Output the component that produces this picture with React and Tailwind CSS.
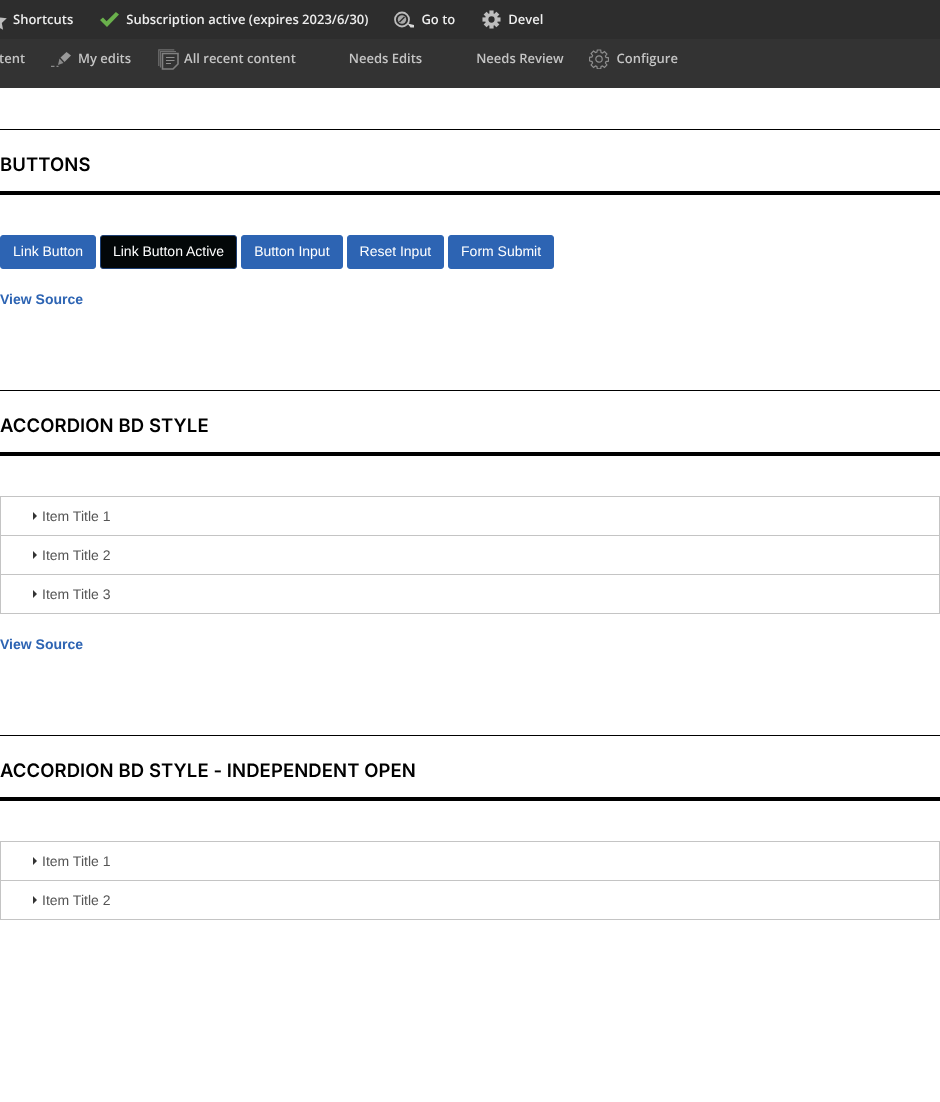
import React from 'react';

const openSans = { fontFamily: '"Open Sans", sans-serif' };
const TEETH = [0, 45, 90, 135, 180, 225, 270, 315];

function StarIcon() {
  return (
    <svg width="20" height="20" viewBox="0 0 20 20" className="ml-[-13px] mt-[3px]">
      <path d="M10 0l3 6.4 6.8.9-5 4.7 1.3 6.8L10 15.5 3.900 18.800l1.300-6.800-5-4.700 6.800-.9z" fill="#bdbdbd" />
    </svg>
  );
}

function CheckIcon() {
  return (
    <svg width="19" height="15" viewBox="0 0 19 15">
      <path d="M0 8l3-2.600 3.600 3.800L15.900 0 19 2.500 7 15z" fill="#6ab04c" />
    </svg>
  );
}

function GotoIcon() {
  return (
    <svg width="21" height="18" viewBox="0 0 21 18">
      <circle cx="8" cy="8.500" r="7" fill="none" stroke="#bdbdbd" strokeWidth="1.800" />
      <circle cx="8" cy="8.500" r="4.200" fill="#a8a8a8" />
      <path d="M5.500 11l5-5" stroke="#2d2d2d" strokeWidth="1.500" />
      <path d="M13.500 12.500l6.500 1.500v2.500h-3.500z" fill="#d8d8d8" />
    </svg>
  );
}

function SolidGearIcon() {
  return (
    <svg width="19" height="19" viewBox="0 0 20 20">
      {TEETH.map(a => (
        <rect key={a} x="7.800" y="0.500" width="4.400" height="5" fill="#bdbdbd" transform={`rotate(${a} 10 10)`} />
      ))}
      <circle cx="10" cy="10" r="5" fill="none" stroke="#bdbdbd" strokeWidth="3.400" />
    </svg>
  );
}

function OutlineGearIcon() {
  return (
    <svg width="20" height="20" viewBox="0 0 20 20">
      <path d="M8.300 1h3.400l.4 2.500 1.400.6 2-1.500 2.400 2.400-1.500 2 .6 1.400 2.500.4v3.400l-2.500.4-.6 1.400 1.500 2-2.400 2.400-2-1.500-1.400.6-.4 2.400H8.300l-.4-2.400-1.400-.6-2 1.500-2.400-2.400 1.500-2-.6-1.400L.5 11.700V8.300L3 7.900l.6-1.400-1.500-2 2.400-2.400 2 1.500 1.400-.6z"
        fill="none" stroke="#8e8e8e" strokeWidth="1.200" />
      <circle cx="10" cy="10" r="3.200" fill="none" stroke="#8e8e8e" strokeWidth="1.200" />
    </svg>
  );
}

function PencilIcon() {
  return (
    <svg width="21" height="17" viewBox="0 0 21 17">
      <path d="M9.500 6.500L15.500 1l4.500 3.500-6.500 6.500z" fill="#9a9a9a" />
      <path d="M8.500 7.500l4 4.500-5.500 2z" fill="#8a8a8a" />
      <path d="M0 14.800h3.500v1.200H0zM5.500 14.800h2v1.200h-2z" fill="#8a8a8a" />
    </svg>
  );
}

function PagesIcon() {
  return (
    <svg width="21" height="21" viewBox="0 0 21 21" fill="none" stroke="#6f6f6f">
      <path d="M.8 17V.8h15.500" strokeWidth="1.200" />
      <path d="M2.500 18.500V2.500h15.500" strokeWidth="1.200" />
      <path d="M4.500 20V4.500h15.500v10.500L15 20z" strokeWidth="1.600" fill="#333333" stroke="#808080" />
      <path d="M8 8.500h8.500M8 11.500h8.500M8 14.500h5" strokeWidth="1.200" stroke="#8e8e8e" />
    </svg>
  );
}

function TopBar() {
  return (
    <div className="h-[88px] text-[13px] font-semibold" style={openSans}>
      <div className="flex h-[39px] items-center bg-[#2d2d2d] text-[#eeeeee]">
        <div className="flex items-center gap-[6px]"><StarIcon /><span>Shortcuts</span></div>
        <div className="ml-[27px] flex items-center gap-[7px]"><CheckIcon /><span>Subscription active (expires 2023/6/30)</span></div>
        <div className="ml-[26px] flex items-center gap-[6px]"><GotoIcon /><span>Go to</span></div>
        <div className="ml-[27px] flex items-center gap-[7px]"><SolidGearIcon /><span>Devel</span></div>
      </div>
      <div className="flex h-[49px] items-start bg-[#333333] pt-[10px] text-[#c5c5c5]">
        <span className="-ml-px flex h-5 items-center">tent</span>
        <div className="ml-[26px] flex h-5 items-center gap-[6px]"><PencilIcon /><span>My edits</span></div>
        <div className="ml-[27px] flex h-5 items-center gap-[5px]"><PagesIcon /><span>All recent content</span></div>
        <span className="ml-[53px] flex h-5 items-center">Needs Edits</span>
        <span className="ml-[54px] flex h-5 items-center">Needs Review</span>
        <div className="ml-[25px] flex h-5 items-center gap-[8px]"><OutlineGearIcon /><span>Configure</span></div>
      </div>
    </div>
  );
}

function SectionTitle({ children }) {
  return (
    <div className="border-t border-black">
      <h2 className="flex h-[65px] items-center border-b-4 border-black pt-[11px] text-[18.5px] font-semibold tracking-[0.08px] text-black" style={{ fontFamily: 'Inter, sans-serif' }}>
        {children}
      </h2>
    </div>
  );
}

function ViewSource() {
  return <a className="block text-sm leading-5 font-bold text-[#2d64b3]">View Source</a>;
}

function Btn({ children, active }) {
  return (
    <span className={`block h-[34px] rounded-[3px] border px-3 text-sm leading-[30px] tracking-[-0.008px] text-white ${active ? 'border-[#1d3f73] bg-[#030708]' : 'border-[#2d64b3] bg-[#2d64b3]'}`}>
      {children}
    </span>
  );
}

function Accordion({ items }) {
  return (
    <div className="border border-b-0 border-[#c4c4c4]">
      {items.map(item => (
        <div key={item} className="flex h-[39px] items-center border-b border-[#c4c4c4] pl-8 text-sm text-[#555555]">
          <svg width="4" height="8" viewBox="0 0 4 8" className="mr-[5px] mt-[-1px]"><path d="M0 0l4 4-4 4z" fill="#333333" /></svg>
          {item}
        </div>
      ))}
    </div>
  );
}

export default function App() {
  return (
    <div className="min-h-[1102px] overflow-hidden bg-white">
      <div className="[text-rendering:geometricPrecision] [will-change:transform]" style={{ fontFamily: '"Liberation Sans", Arial, sans-serif' }}>
        <TopBar />

        <div className="pt-[41px]">
          <SectionTitle>BUTTONS</SectionTitle>
          <div className="mt-10 flex gap-1">
            <Btn>Link Button</Btn>
            <Btn active>Link Button Active</Btn>
            <Btn>Button Input</Btn>
            <Btn>Reset Input</Btn>
            <Btn>Form Submit</Btn>
          </div>
          <div className="mt-5"><ViewSource /></div>
        </div>

        <div className="pt-[81px]">
          <SectionTitle>ACCORDION BD STYLE</SectionTitle>
          <div className="mt-10"><Accordion items={['Item Title 1', 'Item Title 2', 'Item Title 3']} /></div>
          <div className="mt-5"><ViewSource /></div>
        </div>

        <div className="pt-[81px]">
          <SectionTitle>ACCORDION BD STYLE - INDEPENDENT OPEN</SectionTitle>
          <div className="mt-10"><Accordion items={['Item Title 1', 'Item Title 2']} /></div>
        </div>
      </div>
    </div>
  );
}
